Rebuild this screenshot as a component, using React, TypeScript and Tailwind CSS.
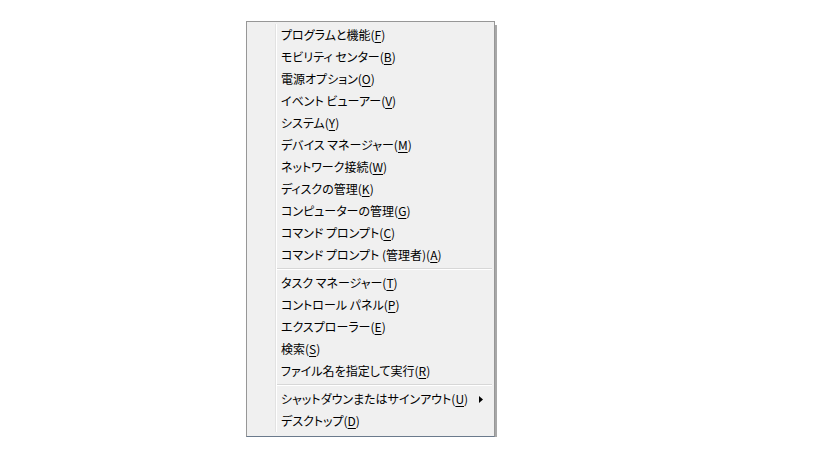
type Item = { label: string; key: string; tail?: string; arrow?: boolean };

const groups: Item[][] = [
  [
    { label: "プログラムと機能", key: "F" },
    { label: "モビリティ センター", key: "B" },
    { label: "電源オプション", key: "O" },
    { label: "イベント ビューアー", key: "V" },
    { label: "システム", key: "Y" },
    { label: "デバイス マネージャー", key: "M" },
    { label: "ネットワーク接続", key: "W" },
    { label: "ディスクの管理", key: "K" },
    { label: "コンピューターの管理", key: "G" },
    { label: "コマンド プロンプト", key: "C" },
    { label: "コマンド プロンプト (管理者)", key: "A" },
  ],
  [
    { label: "タスク マネージャー", key: "T" },
    { label: "コントロール パネル", key: "P" },
    { label: "エクスプローラー", key: "E" },
    { label: "検索", key: "S" },
    { label: "ファイル名を指定して実行", key: "R" },
  ],
  [
    { label: "シャットダウンまたはサインアウト", key: "U", arrow: true },
    { label: "デスクトップ", key: "D" },
  ],
];

function Row({ item }: { item: Item }) {
  return (
    <div className="flex h-[22px] items-center">
      <div className="w-[28px] self-stretch" />
      <div className="w-px self-stretch bg-[#e2e2e2]" />
      <div className="w-px self-stretch bg-white" />
      <div className="flex flex-1 items-center justify-between pl-[4px] pr-[10px]">
        <span className="whitespace-pre">
          {item.label}(<span className="underline underline-offset-2">{item.key}</span>)
        </span>
        {item.arrow && (
          <svg width="4" height="7" viewBox="0 0 4 7" className="mr-[1px]">
            <path d="M0 0 L4 3.5 L0 7 Z" fill="#000" />
          </svg>
        )}
      </div>
    </div>
  );
}

function Separator() {
  return (
    <div className="flex h-[6px]">
      <div className="w-[28px]" />
      <div className="w-px bg-[#e2e2e2]" />
      <div className="w-px bg-white" />
      <div className="flex flex-1 flex-col justify-center pr-[2px]">
        <div className="h-px bg-[#d7d7d7]" />
        <div className="h-px bg-white" />
      </div>
    </div>
  );
}

export default function App() {
  return (
    <div className="h-[460px] w-[819px] bg-white pl-[246px] pt-[21px] font-['Noto_Sans_CJK_JP','Noto_Sans',sans-serif] text-[12px] leading-none text-black [font-feature-settings:'palt']">
      <div className="flex w-[251px]">
        <div className="w-[251px] border border-[#979797] border-b-[#6b7a8c] bg-[#f0f0f0] pb-[4px] pt-[2px]">
          {groups.map((g, gi) => (
            <div key={gi}>
              {gi > 0 && <Separator />}
              {g.map((item) => (
                <Row key={item.key} item={item} />
              ))}
            </div>
          ))}
        </div>
        <div className="mt-[4px] w-[2px] bg-[#a8a8a8]" />
      </div>
    </div>
  );
}
